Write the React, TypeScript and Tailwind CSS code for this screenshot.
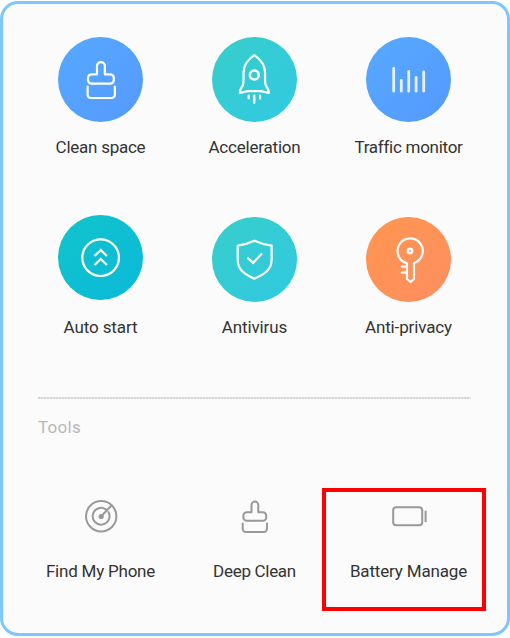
import type { ReactNode } from 'react';

const Glyph = ({ children }: { children: ReactNode }) => (
  <svg viewBox="0 0 85 85" className="size-[85px]" fill="none" stroke="white" strokeWidth="2.2" strokeLinecap="round" strokeLinejoin="round">
    {children}
  </svg>
);

type Shortcut = { label: string; bg: string; lift?: string; text: string; icon: ReactNode };

const apps: Shortcut[] = [
  {
    label: 'Clean space',
    text: 'tracking-[-0.25px]',
    bg: 'from-[#55a9ff] to-[#5599ff]',
    icon: (
      <Glyph>
        <path d="M39 37.3V29a3.9 3.9 0 0 1 7.8 0v8.3h5.4a3.6 3.6 0 0 1 3.6 3.6v2.2a3.6 3.6 0 0 1-3.6 3.6H33.6a3.6 3.6 0 0 1-3.6-3.6v-2.2a3.6 3.6 0 0 1 3.6-3.6z" />
        <path d="M29.6 49.500v8.300a3.200 3.200 0 0 0 3.200 3.200h20.900a3.200 3.200 0 0 0 3.200-3.200v-8.300" />
      </Glyph>
    ),
  },
  {
    label: 'Acceleration',
    text: 'tracking-[-0.2px]',
    bg: 'from-[#38ceca] to-[#30c9e2]',
    icon: (
      <Glyph>
        <path d="M42.3 18.2C36 22.5 31.5 28 31.5 36c0 6 .5 9.5-.7 12.3-1 2.3-3 3.4-3 7.7 3.5-.3 5-1.9 8.7-1.9h11.6c3.7 0 5.2 1.6 8.7 1.9 0-4.3-2-5.4-3-7.7-1.2-2.8-.7-6.3-.7-12.3 0-8-4.5-13.5-10.8-17.8z" />
        <circle cx="42.3" cy="38" r="4.5" strokeWidth="2.5" />
        <path d="M36.7 58.5v3M42.3 58.5v7.5M48 58.5v3" />
      </Glyph>
    ),
  },
  {
    label: 'Traffic monitor',
    text: 'tracking-[-0.27px]',
    bg: 'from-[#55a9ff] to-[#5599ff]',
    icon: (
      <Glyph>
        <path d="M27.7 31.5v22.7M35.3 43.5v10.7M42.7 34.5v19.7M50.1 40.5v13.7M57.7 35v19.2" strokeOpacity=".85" strokeWidth="2.8" />
      </Glyph>
    ),
  },
  {
    label: 'Auto start',
    text: 'tracking-[-0.1px]',
    bg: 'from-[#12c4cb] to-[#0bb9d9]',
    lift: '-translate-y-[2px]',
    icon: (
      <Glyph>
        <circle cx="42.6" cy="42.7" r="18.3" />
        <path d="m36.5 41 6.2-6 6.2 6M36.5 50l6.2-6 6.2 6" strokeLinecap="butt" strokeLinejoin="miter" />
      </Glyph>
    ),
  },
  {
    label: 'Antivirus',
    text: 'tracking-[-0.13px]',
    bg: 'from-[#38ceca] to-[#30c9e2]',
    icon: (
      <Glyph>
        <path d="M42.4 23.7c-4.9 2.3-10 4-16.7 4.9v14.2c0 10 6.5 14.2 16.7 18.9 10.2-4.7 17.2-8.9 17.2-18.9V28.6c-6.7-.9-12.3-2.6-17.2-4.9z" />
        <path d="m35.4 40.6 5.7 5.3 8.9-9.3" strokeLinecap="butt" strokeLinejoin="miter" />
      </Glyph>
    ),
  },
  {
    label: 'Anti-privacy',
    text: 'tracking-[-0.13px]',
    bg: 'from-[#ff9650] to-[#ff8e60]',
    icon: (
      <Glyph>
        <path d="M41 46.2A12.6 12.6 0 1 1 48 46v16l-3.4 3-3.6-3zM41 49.6h-5.2M41 55.7h-5.2" />
        <circle cx="44" cy="34" r="2.2" strokeWidth="2.4" />
      </Glyph>
    ),
  },
];

const ToolGlyph = ({ children }: { children: ReactNode }) => (
  <svg viewBox="0 0 40 40" className="size-10" fill="none" stroke="#999" strokeWidth="2" strokeLinecap="round" strokeLinejoin="round">
    {children}
  </svg>
);

const tools = [
  {
    label: 'Find My Phone',
    text: 'tracking-[-0.22px]',
    icon: (
      <ToolGlyph>
        <circle cx="20.2" cy="20.3" r="15.2" />
        <path d="M24.8 13.3a8.4 8.4 0 1 0 2.6 2.8M20.2 20.3 30.3 9.7" />
        <circle cx="20.2" cy="20.5" r="2.6" fill="#999" stroke="none" />
      </ToolGlyph>
    ),
  },
  {
    label: 'Deep Clean',
    text: 'tracking-[-0.3px]',
    icon: (
      <ToolGlyph>
        <path d="M16.5 16.3V9a3.4 3.4 0 0 1 6.8 0v7.3h4.6a3.3 3.3 0 0 1 3.3 3.3v1.9a3.3 3.3 0 0 1-3.3 3.3H11.7a3.3 3.3 0 0 1-3.3-3.3v-1.9a3.3 3.3 0 0 1 3.3-3.3z" />
        <path d="M7.7 27.6v5.1a3.2 3.2 0 0 0 3.2 3.2h17.9a3.2 3.2 0 0 0 3.2-3.2v-5.1" />
      </ToolGlyph>
    ),
  },
  {
    label: 'Battery Manage',
    text: 'tracking-[-0.16px]',
    icon: (
      <ToolGlyph>
        <rect x="4.2" y="11.3" width="29" height="18" rx="3" />
        <path d="M36.6 14.8v11.4" strokeLinecap="butt" />
      </ToolGlyph>
    ),
  },
];

export default function App() {
  return (
    <div className="relative h-[638px] w-[510px] bg-white pt-px font-['Roboto','Noto_Sans',sans-serif] text-[17px] leading-5 text-[#333]">
      <main className="h-[635px] rounded-[18px] border-[3px] border-[#7cc7ff] bg-[#fbfbfb] pt-[33px]">
        <div className="ml-[20.5px] grid w-[462px] grid-cols-3">
          {apps.map((app) => (
            <div key={app.label} className="flex h-[180px] flex-col items-center">
              <div className={`size-[85px] rounded-full bg-linear-to-br ${app.bg} ${app.lift ?? ''}`}>{app.icon}</div>
              <span className={`mt-[15px] whitespace-nowrap ${app.text}`}>{app.label}</span>
            </div>
          ))}
        </div>
        <div className="ml-[35px] h-[2px] w-[433px] bg-[repeating-linear-gradient(90deg,#d6d6d6_0_2px,#e6e6e6_2px_3px)]" />
        <h2 className="mt-[18px] ml-[35px] tracking-[0.3px] text-[#b8b8b8]">Tools</h2>
        <div className="mt-[59px] ml-[20.5px] grid w-[462px] grid-cols-3">
          {tools.map((tool) => (
            <div key={tool.label} className="flex flex-col items-center">
              {tool.icon}
              <span className={`mt-[25px] whitespace-nowrap ${tool.text}`}>{tool.label}</span>
            </div>
          ))}
        </div>
      </main>
      <div className="absolute top-[488px] left-[322px] h-[123px] w-[164px] border-4 border-[#ff0000]" />
    </div>
  );
}
